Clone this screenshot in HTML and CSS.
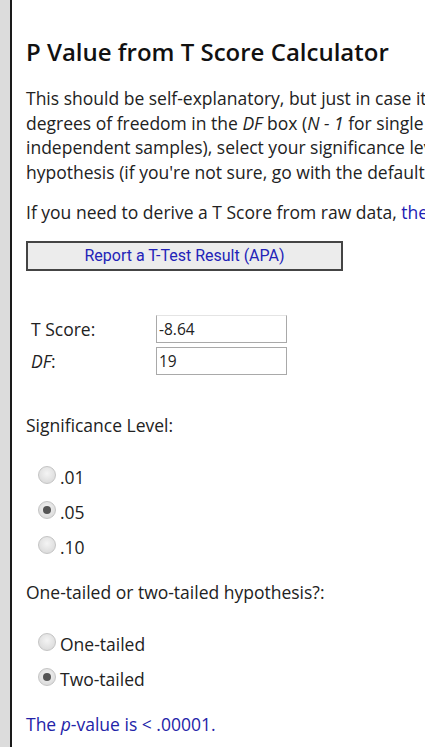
FILE: index.html
```html
<!DOCTYPE html>
<html>
<head>
<meta charset="utf-8">
<link rel="stylesheet" href="styles.css">
</head>
<body>
<div class="page">
  <div class="strip"></div>
  <main class="content">
    <h1 class="title">P Value from T Score Calculator</h1>
    <p class="intro">This should be self-explanatory, but just in case it's not: your t-score goes in the <i>T Score</i> box, you stick your<br>degrees of freedom in the <i>DF</i> box (<i>N - 1</i> for single sample and dependent pairs, (<i>N</i><sub>1</sub> - 1) + (<i>N</i><sub>2</sub> - 1) for<br>independent samples), select your significance level and whether you're testing a one or two-tailed<br>hypothesis (if you're not sure, go with the defaults), then press the button to generate your result.</p>
    <p class="intro">If you need to derive a T Score from raw data, <a class="link" href="#">then you can find a t-test calculator here</a>.</p>
    <button class="report">Report a T-Test Result (APA)</button>
    <table class="fields">
      <tr><td class="lbl">T Score:</td><td><input class="num top" type="text" value="-8.64"></td></tr>
      <tr><td class="lbl"><i>DF</i>:</td><td><input class="num" type="text" value="19"></td></tr>
    </table>
    <p class="q">Significance Level:</p>
    <div class="radios">
      <label class="opt"><input class="rb" type="radio" name="sig"><span>.01</span></label>
      <label class="opt"><input class="rb" type="radio" name="sig" checked><span>.05</span></label>
      <label class="opt"><input class="rb" type="radio" name="sig"><span>.10</span></label>
    </div>
    <p class="q">One-tailed or two-tailed hypothesis?:</p>
    <div class="radios">
      <label class="opt"><input class="rb" type="radio" name="tail"><span>One-tailed</span></label>
      <label class="opt"><input class="rb" type="radio" name="tail" checked><span>Two-tailed</span></label>
    </div>
    <p class="result">The <i>p</i>-value is &lt; .00001.</p>
  </main>
</div>
</body>
</html>
```

FILE: styles.css
```css
html, body {
  margin: 0;
  padding: 0;
  overflow: hidden;
  background: #fff;
}
body {
  font-family: "Open Sans", "DejaVu Sans", sans-serif;
  color: #222;
  font-size: 17.5px;
}
.page {
  display: flex;
  min-height: 747px;
}
.strip {
  width: 10px;
  flex: none;
  background: #dcdcdc;
  border-right: 2px solid #1a1a1a;
}
.content {
  flex: none;
  width: 1150px;
  padding: 36px 0 0 14px;
}
.title {
  font-size: 24px;
  font-weight: 600;
  margin: 0 0 18px;
  line-height: 32px;
  color: #111;
}
.intro {
  margin: 0 0 16px;
  line-height: 24.5px;
}
.intro sub { font-size: 11px; line-height: 0; }
.link { color: #2020b4; text-decoration: none; }
.report {
  display: block;
  width: 317px;
  height: 30px;
  margin: 4px 0 43px;
  background: #ececec;
  border: 2px solid #444;
  color: #2323b8;
  font-family: Roboto, "Liberation Sans", sans-serif;
  font-size: 16px;
  padding: 0;
}
.fields {
  border-collapse: separate;
  border-spacing: 0 2px;
  margin: -2px 0 35px 3px;
}
.lbl {
  width: 124px;
  padding: 1px 0 1px 2px;
}
.num {
  width: 131px;
  height: 28px;
  box-sizing: border-box;
  border: 1px solid #a9a9a9;
  padding: 1px 2px 1px 2px;
  font-family: "Open Sans", sans-serif;
  font-size: 15.5px;
  color: #222;
  margin: 0;
  display: block;
}
.num.top { border-top-color: #e4e4e4; }
.q {
  margin: 0 0 28px;
  line-height: 24px;
}
.radios {
  display: flex;
  flex-direction: column;
  gap: 11px;
  margin: 0 0 21px 12px;
}
.opt {
  display: flex;
  align-items: center;
  height: 24px;
}
.rb {
  appearance: none;
  -webkit-appearance: none;
  width: 18px;
  height: 18px;
  margin: -3px 4px 0 0;
  border-radius: 50%;
  border: 1px solid #c4c4c4;
  background: radial-gradient(circle at 50% 40%, #f4f4f4 0%, #dedede 70%, #d2d2d2 100%);
  position: relative;
  box-sizing: border-box;
}
.rb:checked::after {
  content: "";
  position: absolute;
  left: 4px;
  top: 4px;
  width: 8px;
  height: 8px;
  border-radius: 50%;
  background: #555;
}
.result {
  margin: 0;
  color: #2323a8;
  line-height: 24px;
}
```
